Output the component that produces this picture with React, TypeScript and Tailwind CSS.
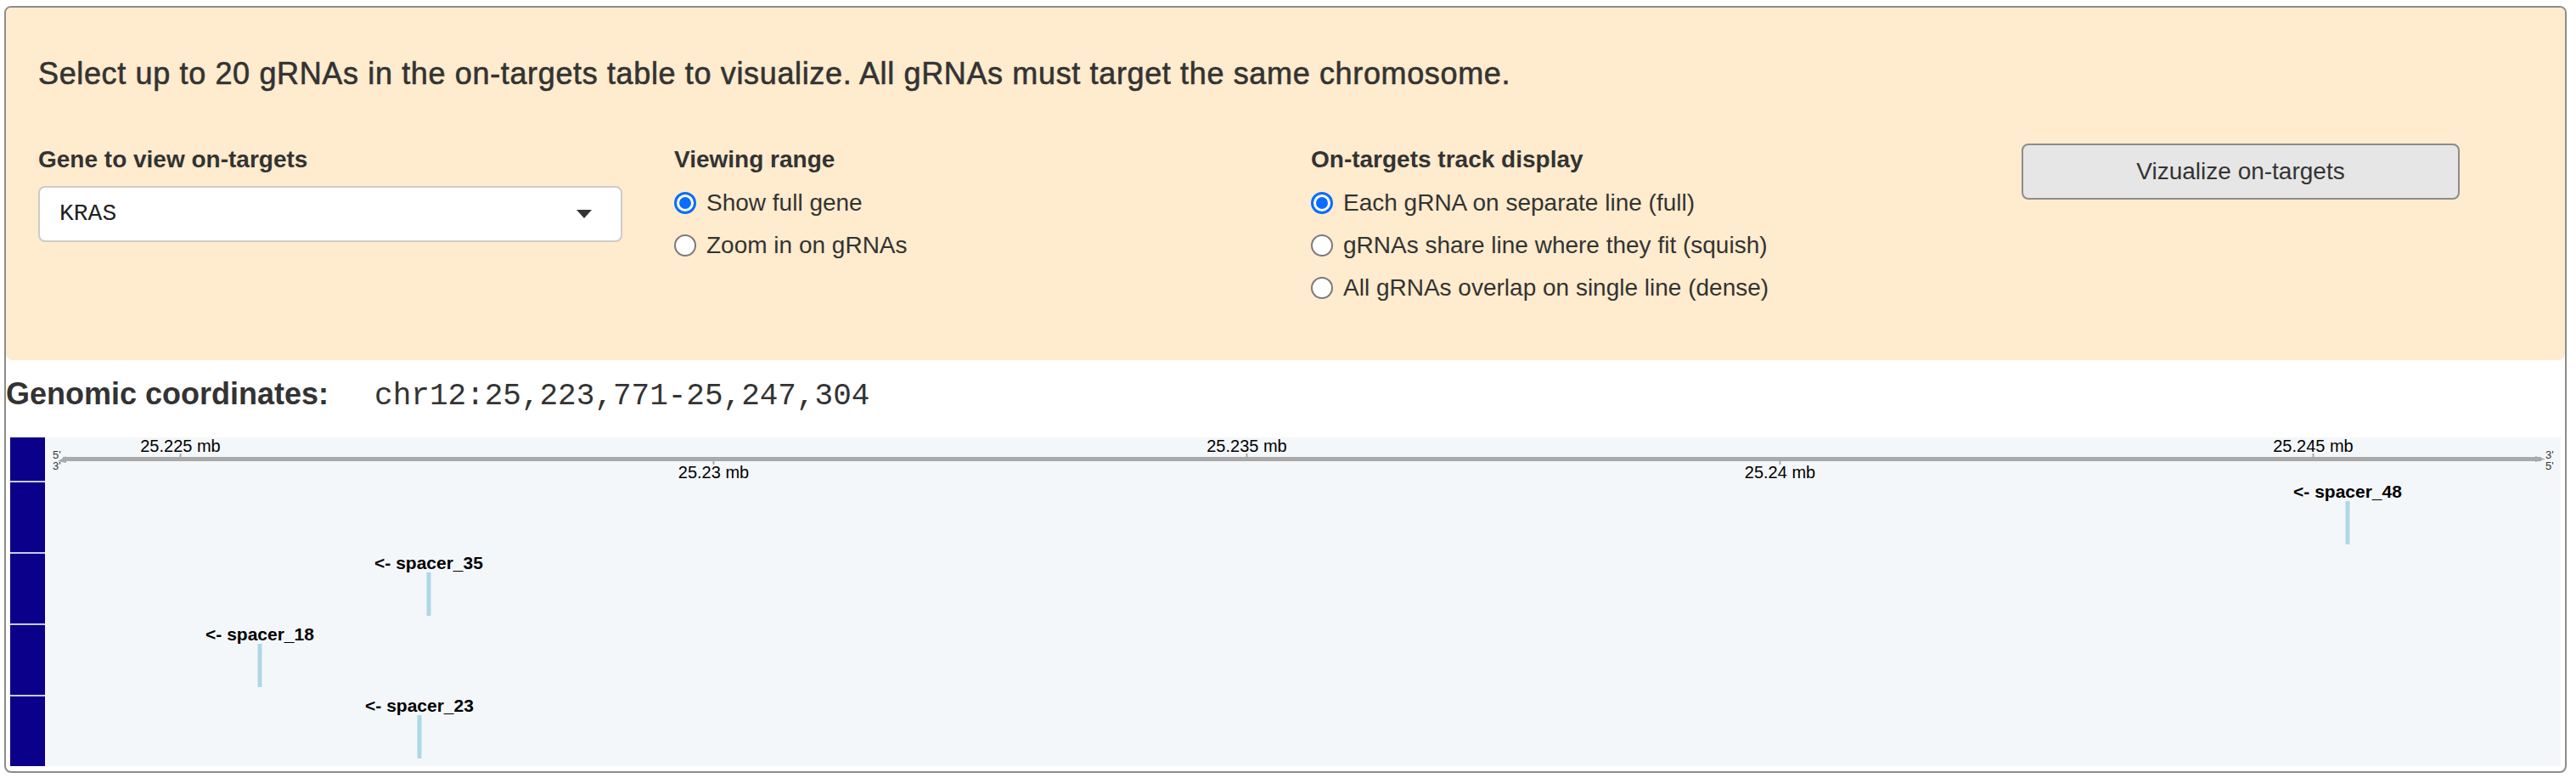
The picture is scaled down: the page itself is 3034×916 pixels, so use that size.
import clsx from "clsx";

type Tick = { x: number; label: string; above: boolean };

type Spacer = { name: string; row: number; x: number };

const TICKS: Tick[] = [
  { x: 160.5, label: "25.225 mb", above: true },
  { x: 788.5, label: "25.23 mb", above: false },
  { x: 1416.5, label: "25.235 mb", above: true },
  { x: 2044.5, label: "25.24 mb", above: false },
  { x: 2672.5, label: "25.245 mb", above: true },
];

const SPACERS: Spacer[] = [
  { name: "spacer_48", row: 0, x: 2712 },
  { name: "spacer_35", row: 1, x: 452 },
  { name: "spacer_18", row: 2, x: 253 },
  { name: "spacer_23", row: 3, x: 441 },
];

const PLOT_W = 2963;
const PLOT_H = 387;
const AXIS_H = 51;
const ROW_H = 82;
const GAP = 2;

function Radio({ label, checked = false }: { label: string; checked?: boolean }) {
  return (
    <label className="flex h-[50px] items-center gap-[12px] text-[28px] leading-[28px] text-[#333]">
      <span
        className={clsx(
          "flex h-[26px] w-[26px] shrink-0 items-center justify-center rounded-full bg-white",
          checked ? "border-[3px] border-[#0b6cff]" : "border-2 border-[#7a7a7a]"
        )}
      >
        {checked && <span className="h-[14px] w-[14px] rounded-full bg-[#0b6cff]" />}
      </span>
      {label}
    </label>
  );
}

function TrackPlot() {
  const rowTop = (row: number) => AXIS_H + GAP + row * (ROW_H + GAP);
  return (
    <svg width={PLOT_W} height={PLOT_H} className="block shrink-0" fontFamily="Liberation Sans, Arial, sans-serif">
      {/* genome axis */}
      <rect x={21} y={23} width={2919} height={5} fill="#a9a9a9" />
      <polygon points="15,28 25,22 25,30" fill="#a9a9a9" />
      <polygon points="2945,25.5 2933,22 2933,29" fill="#a9a9a9" />
      <text x={9} y={25} fontSize={13} fill="#333">5'</text>
      <text x={9} y={38} fontSize={13} fill="#333">3'</text>
      <text x={2945} y={25} fontSize={13} fill="#333">3'</text>
      <text x={2945} y={38} fontSize={13} fill="#333">5'</text>
      {TICKS.map((t) => (
        <g key={t.label}>
          <rect x={t.x - 2} y={t.above ? 19 : 28} width={2} height={4} fill="#a9a9a9" />
          <text x={t.x - 1} y={t.above ? 17 : 48} fontSize={20} textAnchor="middle" fill="#000">
            {t.label}
          </text>
        </g>
      ))}

      {/* on-target rows */}
      {SPACERS.map((s) => {
        const top = rowTop(s.row);
        return (
          <g key={s.name}>
            <text x={s.x} y={top + 18} fontSize={21} fontWeight={700} textAnchor="middle" fill="#000">
              {"<- " + s.name}
            </text>
            <rect x={s.x - 2.5} y={top + 22} width={5} height={51} fill="#add8e6" />
          </g>
        );
      })}
    </svg>
  );
}

export default function App() {
  return (
    <div className="min-h-screen bg-white font-['Liberation_Sans',Arial,sans-serif] text-[#333]">
      <div className="ml-[5px] mt-[7px] w-[3018px] overflow-hidden rounded-[8px] border-2 border-[#8c8c8c]">
        <div className="h-[415px] rounded-b-[8px] bg-[#ffebcd] pl-[38px] pt-[60px]">
          <h4 className="text-[36px] leading-[36px] tracking-[0.64px] [-webkit-text-stroke:0.6px_#333]">
            Select up to 20 gRNAs in the on-targets table to visualize. All gRNAs must target the same chromosome.
          </h4>

          <div className="mt-[69px] grid grid-cols-[749px_750px_837px_516px]">
            <div>
              <div className="text-[28px] font-bold leading-[28px]">Gene to view on-targets</div>
              <div className="mt-[17px] flex h-[66px] w-[688px] items-center justify-between rounded-[8px] border-2 border-[#cccccc] bg-white pl-[23px] pr-[34px]">
                <span className="font-['Liberation_Mono','Courier_New',monospace] text-[28px] text-[#222]">KRAS</span>
                <span className="h-0 w-0 border-x-[9px] border-t-[10px] border-x-transparent border-t-[#333]" />
              </div>
            </div>

            <div>
              <div className="text-[28px] font-bold leading-[28px]">Viewing range</div>
              <div className="mt-[12px] flex flex-col">
                <Radio label="Show full gene" checked />
                <Radio label="Zoom in on gRNAs" />
              </div>
            </div>

            <div>
              <div className="text-[28px] font-bold leading-[28px]">On-targets track display</div>
              <div className="mt-[12px] flex flex-col">
                <Radio label="Each gRNA on separate line (full)" checked />
                <Radio label="gRNAs share line where they fit (squish)" />
                <Radio label="All gRNAs overlap on single line (dense)" />
              </div>
            </div>

            <div className="-mt-[5px]">
              <button
                type="button"
                className="h-[66px] w-[516px] rounded-[8px] border-2 border-[#8c8c8c] bg-[#e6e6e6] text-[28px] text-[#333]"
              >
                Vizualize on-targets
              </button>
            </div>
          </div>
        </div>

        <div className="mt-[22px] flex items-baseline">
          <span className="text-[36px] font-bold leading-[36px]">Genomic coordinates:</span>
          <span className="ml-[54px] font-['Liberation_Mono','Courier_New',monospace] text-[36px] leading-[36px] text-[#333]">
            chr12:25,223,771-25,247,304
          </span>
        </div>

        <div className="mb-[6px] ml-[5px] mt-[30px] flex w-[3004px] bg-[#f4f7fa]">
          <div className="flex w-[41px] shrink-0 flex-col gap-[2px] bg-[#c9c9e6]">
            <div className="h-[51px] bg-[#0a0089]" />
            <div className="h-[82px] bg-[#0a0089]" />
            <div className="h-[82px] bg-[#0a0089]" />
            <div className="h-[82px] bg-[#0a0089]" />
            <div className="h-[82px] bg-[#0a0089]" />
          </div>
          <TrackPlot />
        </div>
      </div>
    </div>
  );
}
